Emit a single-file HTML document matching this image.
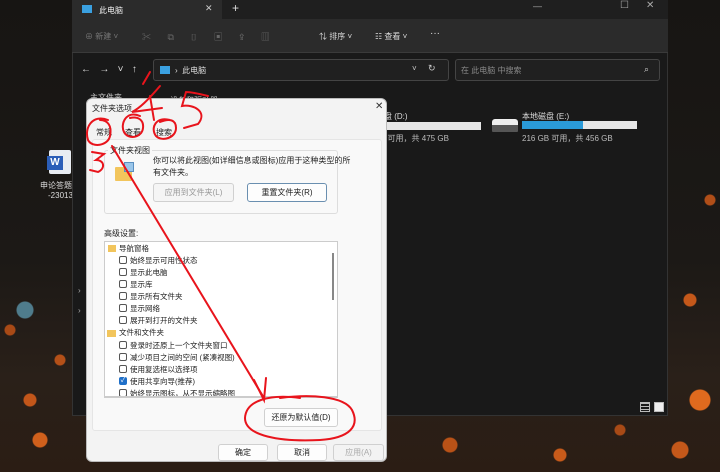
<!DOCTYPE html>
<html><head><meta charset="utf-8"><style>
*{margin:0;padding:0;box-sizing:border-box}
body{width:720px;height:472px;overflow:hidden;position:relative;font-family:"Liberation Sans","Noto Sans CJK SC",sans-serif;font-size:8px;background:#1a1613}
.a{position:absolute;white-space:nowrap}
.bg{left:0;top:0;width:720px;height:472px;background:
radial-gradient(circle at 30px 400px,#c2561a 0 6px,transparent 7px),
radial-gradient(circle at 10px 330px,#a84a16 0 5px,transparent 6px),
radial-gradient(circle at 40px 440px,#d0601c 0 7px,transparent 8px),
radial-gradient(circle at 60px 360px,#b45018 0 5px,transparent 6px),
radial-gradient(circle at 700px 400px,#e06a1e 0 10px,transparent 11px),
radial-gradient(circle at 690px 300px,#c4581a 0 6px,transparent 7px),
radial-gradient(circle at 710px 200px,#b04e18 0 5px,transparent 6px),
radial-gradient(circle at 680px 450px,#c4581a 0 8px,transparent 9px),
radial-gradient(circle at 450px 445px,#b95217 0 7px,transparent 8px),
radial-gradient(circle at 560px 455px,#c75a1a 0 6px,transparent 7px),
radial-gradient(circle at 620px 430px,#a84a16 0 5px,transparent 6px),
radial-gradient(circle at 25px 310px,#4f7c8c 0 8px,transparent 9px),
linear-gradient(180deg,#171513 0%,#1c1916 55%,#2a2019 80%,#2b1d14 100%)}
.cb{position:absolute;left:119px;width:8px;height:8px;border:1px solid #555;border-radius:2px;background:#fff}
.it{position:absolute;left:130px;color:#222;font-size:7.5px}
.btn{position:absolute;background:#fdfdfd;border:1px solid #d0d0d0;border-radius:3px;text-align:center;color:#222;font-size:8px}
</style></head><body>
<div class="a bg"></div>
<div class="a" style="left:49px;top:150px;width:22px;height:24px;background:#e8ecf2;border-radius:2px"></div>
<div class="a" style="left:47px;top:156px;width:16px;height:14px;background:#2b5eb8;color:#fff;font-weight:bold;font-size:10px;text-align:center;line-height:14px">W</div>
<div class="a" style="left:40px;top:180px;color:#ddd">申论答题</div>
<div class="a" style="left:48px;top:191px;color:#ddd">-23013</div>

<!-- explorer -->
<div class="a" style="left:72px;top:0;width:596px;height:416px;background:#191919;border:1px solid #333"></div>
<div class="a" style="left:72px;top:0;width:596px;height:19px;background:#1f1f1f"></div>
<div class="a" style="left:72px;top:0;width:150px;height:19px;background:#2b2b2b"></div>
<div class="a" style="left:82px;top:5px;width:10px;height:8px;background:#3aa0e0"></div>
<div class="a" style="left:99px;top:5px;color:#eee">此电脑</div>
<div class="a" style="left:205px;top:3px;color:#ccc;font-size:9px">✕</div>
<div class="a" style="left:232px;top:1px;color:#ddd;font-size:12px">+</div>
<div class="a" style="left:533px;top:1px;color:#aaa;font-size:9px">—</div>
<div class="a" style="left:620px;top:0;color:#aaa;font-size:10px">☐</div>
<div class="a" style="left:646px;top:0;color:#aaa;font-size:10px">✕</div>
<div class="a" style="left:72px;top:19px;width:596px;height:34px;background:#2b2b2b;border-bottom:1px solid #3a3a3a"></div>
<div class="a" style="left:85px;top:31px;color:#777">⊕ 新建 ˅</div>
<div class="a" style="left:142px;top:30px;color:#666;font-size:9px;word-spacing:14px">✂ ⧉ ▯ ▣ ⇪ ▥</div>
<div class="a" style="left:319px;top:31px;color:#ddd">⇅ 排序 ˅</div>
<div class="a" style="left:375px;top:31px;color:#ddd">☷ 查看 ˅</div>
<div class="a" style="left:430px;top:28px;color:#ddd;font-size:10px">···</div>
<div class="a" style="left:81px;top:64px;color:#ddd;font-size:10px">←&nbsp;&nbsp;&nbsp;→&nbsp;&nbsp;&nbsp;˅&nbsp;&nbsp;&nbsp;↑</div>
<div class="a" style="left:153px;top:59px;width:296px;height:22px;background:#202020;border:1px solid #444;border-radius:3px"></div>
<div class="a" style="left:160px;top:66px;width:10px;height:8px;background:#3aa0e0"></div>
<div class="a" style="left:175px;top:65px;color:#ddd">›&nbsp; 此电脑</div>
<div class="a" style="left:412px;top:64px;color:#ccc">˅</div>
<div class="a" style="left:428px;top:63px;color:#ccc;font-size:9px">↻</div>
<div class="a" style="left:455px;top:59px;width:205px;height:22px;background:#202020;border:1px solid #444;border-radius:3px"></div>
<div class="a" style="left:461px;top:65px;color:#888">在 此电脑 中搜索</div>
<div class="a" style="left:644px;top:64px;color:#ccc;font-size:9px">⌕</div>
<div class="a" style="left:90px;top:92px;color:#ccc">主文件夹</div>
<div class="a" style="left:170px;top:95px;color:#ccc">设备和驱动器</div>
<div class="a" style="left:384px;top:111px;color:#ddd">盘 (D:)</div>
<div class="a" style="left:380px;top:122px;width:101px;height:8px;background:#e6e6e6"></div>
<div class="a" style="left:380px;top:133px;color:#bbb">B 可用，共 475 GB</div>
<div class="a" style="left:492px;top:119px;width:26px;height:13px;background:linear-gradient(#eee 0 45%,#555 45%);border-radius:3px 3px 1px 1px"></div>
<div class="a" style="left:522px;top:111px;color:#ddd">本地磁盘 (E:)</div>
<div class="a" style="left:522px;top:121px;width:115px;height:8px;background:#e6e6e6"><div style="width:61px;height:8px;background:#2a9ad8"></div></div>
<div class="a" style="left:522px;top:133px;color:#bbb">216 GB 可用，共 456 GB</div>
<div class="a" style="left:640px;top:402px;width:10px;height:10px;border:1px solid #bbb;background:repeating-linear-gradient(#bbb 0 1px,transparent 1px 3px)"></div>
<div class="a" style="left:654px;top:402px;width:10px;height:10px;border:1px solid #bbb;background:#eee"></div>
<div class="a" style="left:78px;top:286px;color:#aaa">›</div>
<div class="a" style="left:78px;top:306px;color:#aaa">›</div>

<!-- dialog -->
<div class="a" style="left:86px;top:98px;width:301px;height:364px;background:#f3f3f3;border:1px solid #bbb;border-radius:6px"></div>
<div class="a" style="left:92px;top:103px;color:#222">文件夹选项</div>
<div class="a" style="left:375px;top:101px;color:#333;font-size:10px">✕</div>
<div class="a" style="left:96px;top:127px;color:#222">常规</div>
<div class="a" style="left:125px;top:127px;color:#222">查看</div>
<div class="a" style="left:156px;top:127px;color:#222">搜索</div>
<div class="a" style="left:92px;top:139px;width:290px;height:292px;background:#f9f9f9;border:1px solid #e5e5e5;border-radius:3px"></div>
<div class="a" style="left:104px;top:150px;width:234px;height:64px;border:1px solid #ddd;border-radius:3px"></div>
<div class="a" style="left:108px;top:145px;background:#f9f9f9;color:#222;padding:0 2px">文件夹视图</div>
<div class="a" style="left:115px;top:167px;width:17px;height:14px;background:#f2c55c;border-radius:1px"></div>
<div class="a" style="left:124px;top:162px;width:10px;height:10px;background:#9ac6ea;border:1px solid #5a8fc0"></div>
<div class="a" style="left:153px;top:155px;color:#222">你可以将此视图(如详细信息或图标)应用于这种类型的所</div>
<div class="a" style="left:153px;top:167px;color:#222">有文件夹。</div>
<div class="btn" style="left:153px;top:183px;width:81px;height:19px;line-height:17px;color:#999;background:#f5f5f5">应用到文件夹(L)</div>
<div class="btn" style="left:247px;top:183px;width:80px;height:19px;line-height:17px;border:1.5px solid #6a8fb0">重置文件夹(R)</div>
<div class="a" style="left:104px;top:228px;color:#222">高级设置:</div>
<div class="a" style="left:104px;top:241px;width:234px;height:156px;background:#fff;border:1px solid #ccc;overflow:hidden"></div>
<div class="a" style="left:332px;top:253px;width:2px;height:47px;background:#888"></div>
<div class="a" style="left:108px;top:245px;width:8px;height:7px;background:#f2c55c"></div>
<div class="it" style="left:119px;top:243px">导航窗格</div>
<div class="cb" style="top:256px"></div><div class="it" style="top:255px">始终显示可用性状态</div>
<div class="cb" style="top:268px"></div><div class="it" style="top:267px">显示此电脑</div>
<div class="cb" style="top:280px"></div><div class="it" style="top:279px">显示库</div>
<div class="cb" style="top:292px"></div><div class="it" style="top:291px">显示所有文件夹</div>
<div class="cb" style="top:304px"></div><div class="it" style="top:303px">显示网络</div>
<div class="cb" style="top:316px"></div><div class="it" style="top:315px">展开到打开的文件夹</div>
<div class="a" style="left:107px;top:330px;width:9px;height:7px;background:#f2c55c"></div>
<div class="it" style="left:119px;top:327px">文件和文件夹</div>
<div class="cb" style="top:341px"></div><div class="it" style="top:340px">登录时还原上一个文件夹窗口</div>
<div class="cb" style="top:353px"></div><div class="it" style="top:352px">减少项目之间的空间 (紧凑视图)</div>
<div class="cb" style="top:365px"></div><div class="it" style="top:364px">使用复选框以选择项</div>
<div class="cb" style="top:377px;background:#1f6fc8;border-color:#1f6fc8;color:#fff;font-size:7px;line-height:6px;text-align:center">✓</div><div class="it" style="top:376px">使用共享向导(推荐)</div>
<div class="cb" style="top:389px"></div><div class="it" style="top:388px">始终显示图标，从不显示缩略图</div>
<div class="a" style="left:104px;top:396px;width:234px;height:2px;background:#ccc"></div>
<div class="btn" style="left:264px;top:408px;width:74px;height:19px;line-height:17px">还原为默认值(D)</div>
<div class="btn" style="left:218px;top:444px;width:50px;height:17px;line-height:15px">确定</div>
<div class="btn" style="left:277px;top:444px;width:50px;height:17px;line-height:15px">取消</div>
<div class="btn" style="left:333px;top:444px;width:51px;height:17px;line-height:15px;color:#aaa;background:#f3f3f3">应用(A)</div>

<!-- annotations -->
<svg class="a" style="left:0;top:0" width="720" height="472" fill="none" stroke="#e8141c" stroke-width="2" stroke-linecap="round">
<path d="M108 120 C92 114 84 128 88 140 C92 148 108 146 110 136 C112 126 108 120 100 120"/>
<path d="M140 116 C126 110 120 124 124 132 C128 140 142 138 143 128 C144 120 138 116 130 118"/>
<path d="M170 120 C156 116 150 128 156 136 C162 142 176 138 176 128 C176 120 170 118 160 122"/>
<path d="M92 152 L104 154 L96 160 C104 160 106 168 98 172 L90 170"/>
<path d="M160 86 C148 100 140 108 132 112 L162 108 M150 96 L154 120"/>
<path d="M186 92 L182 106 C194 104 208 112 198 124 L184 128 M186 92 C192 92 200 94 208 96"/>
<path d="M112 146 L264 398"/>
<path d="M254 380 L264 400 L266 378"/>
<path d="M300 398 C270 394 246 400 245 418 C245 436 280 442 320 440 C350 438 360 426 352 410 C344 396 310 394 280 398"/>
<path d="M143 84 L150 72"/>
</svg>
</body></html>
